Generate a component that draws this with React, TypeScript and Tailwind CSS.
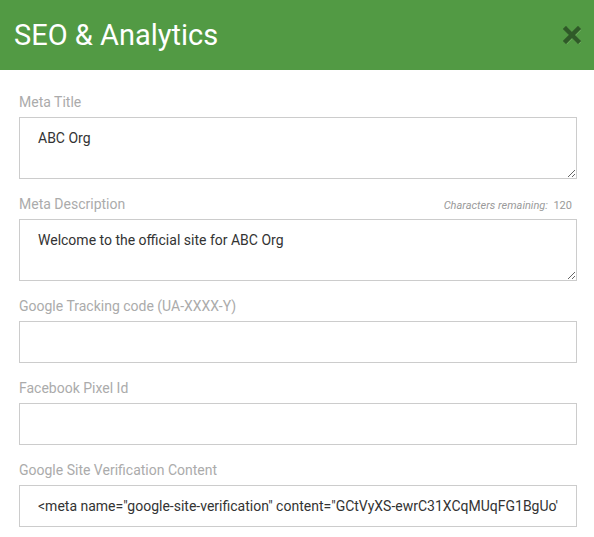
import React from "react";

function Label({ children, right }: { children: React.ReactNode; right?: React.ReactNode }) {
  return (
    <div className="flex items-end justify-between h-[20px] mb-[5px]">
      <span className="text-[14px] leading-[20px] text-[#ababab]">{children}</span>
      {right}
    </div>
  );
}

const fieldBase =
  "block w-full border border-[#cccccc] bg-white text-[14px] text-[#333333] outline-none [font-family:Roboto,'Liberation_Sans',sans-serif]";

export default function App() {
  return (
    <div className="w-[594px] h-[537px] bg-white overflow-hidden [font-family:Roboto,'Liberation_Sans',sans-serif]">
      <div className="h-[70px] bg-[#529a44] flex items-center justify-between pl-[14px] pr-[13px]">
        <h1 className="text-[29px] leading-none text-white font-normal">SEO &amp; Analytics</h1>
        <button className="w-[18px] h-[18px] flex items-center justify-center" aria-label="Close">
          <svg viewBox="0 0 18 18" width="18" height="18">
            <path d="M3 3 L15 15 M15 3 L3 15" stroke="#6fae5f" strokeWidth="4.5" strokeLinecap="square" transform="translate(0.6 0.6)" />
            <path d="M3 3 L15 15 M15 3 L3 15" stroke="#2f5a28" strokeWidth="4.5" strokeLinecap="square" />
          </svg>
        </button>
      </div>

      <div className="px-[19px] pt-[22px] pr-[17px]">
        <Label>Meta Title</Label>
        <textarea className={`${fieldBase} h-[62px] pl-[18px] pt-[10px] resize-y`} defaultValue="ABC Org" />

        <div className="mt-[15px]">
          <Label
            right={
              <span className="text-[11px] leading-[16px] text-[#9a9a9a] pr-[5px]">
                <i>Characters remaining:</i>&nbsp; 120
              </span>
            }
          >
            Meta Description
          </Label>
          <textarea
            className={`${fieldBase} h-[62px] pl-[18px] pt-[10px] resize-y`}
            defaultValue="Welcome to the official site for ABC Org"
          />
        </div>

        <div className="mt-[15px]">
          <Label>Google Tracking code (UA-XXXX-Y)</Label>
          <input className={`${fieldBase} h-[42px] px-[18px]`} />
        </div>

        <div className="mt-[15px]">
          <Label>Facebook Pixel Id</Label>
          <input className={`${fieldBase} h-[42px] px-[18px]`} />
        </div>

        <div className="mt-[15px]">
          <Label>Google Site Verification Content</Label>
          <input
            className={`${fieldBase} h-[42px] px-[18px]`}
            defaultValue={'<meta name="google-site-verification" content="GCtVyXS-ewrC31XCqMUqFG1BgUo\''}
          />
        </div>
      </div>
    </div>
  );
}
